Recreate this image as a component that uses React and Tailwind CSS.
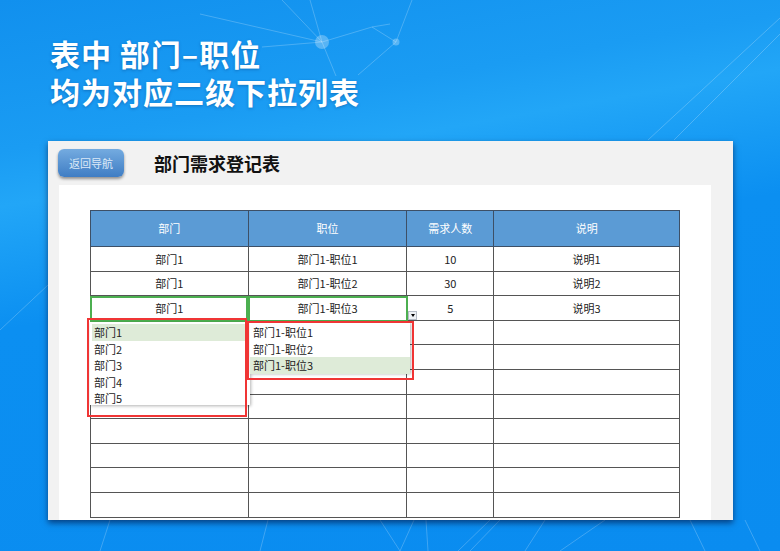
import React from 'react'

const cols = [158, 159, 87, 186]
const head = ['部门', '职位', '需求人数', '说明']
const rows = [
  ['部门1', '部门1-职位1', '10', '说明1'],
  ['部门1', '部门1-职位2', '30', '说明2'],
  ['部门1', '部门1-职位3', '5', '说明3'],
  ...Array.from({ length: 8 }, () => ['', '', '', '']),
]

function Network() {
  return (
    <svg className="absolute inset-0" width="780" height="551" viewBox="0 0 780 551">
      <g stroke="#ffffff" strokeOpacity="0.22" strokeWidth="1" fill="none">
        <line x1="322" y1="42" x2="282" y2="0" />
        <line x1="322" y1="42" x2="310" y2="0" />
        <line x1="322" y1="42" x2="200" y2="14" />
        <line x1="322" y1="42" x2="262" y2="47" />
        <line x1="322" y1="42" x2="336" y2="76" />
        <line x1="322" y1="42" x2="372" y2="27" />
        <line x1="372" y1="27" x2="390" y2="24" />
        <line x1="372" y1="27" x2="396" y2="42" />
        <line x1="396" y1="42" x2="412" y2="0" />
        <line x1="396" y1="42" x2="358" y2="75" />
        <line x1="780" y1="18" x2="648" y2="140" />
        <line x1="780" y1="34" x2="674" y2="140" />
        <line x1="0" y1="330" x2="48" y2="285" />
        <line x1="260" y1="551" x2="268" y2="520" />
        <line x1="400" y1="551" x2="380" y2="520" />
        <line x1="400" y1="551" x2="414" y2="520" />
        <line x1="428" y1="551" x2="426" y2="520" />
        <line x1="458" y1="551" x2="490" y2="520" />
        <line x1="470" y1="551" x2="500" y2="520" />
        <line x1="525" y1="551" x2="545" y2="520" />
        <line x1="560" y1="551" x2="605" y2="520" />
        <line x1="705" y1="551" x2="690" y2="520" />
        <line x1="760" y1="551" x2="745" y2="520" />
        <line x1="100" y1="551" x2="110" y2="520" />
      </g>
      <circle cx="322" cy="42" r="7" fill="#ffffff" fillOpacity="0.28" />
      <circle cx="396" cy="42" r="3.5" fill="#ffffff" fillOpacity="0.28" />
    </svg>
  )
}

export default function App() {
  return (
    <div className="relative w-[780px] h-[551px] overflow-hidden bg-[linear-gradient(170deg,#1190ee_0%,#1a9cf3_22%,#22a6f7_30%,#0b8ff1_48%,#0a8cf0_100%)]"
      style={{ fontFamily: '"Noto Sans CJK SC", "Noto Sans", sans-serif' }}>
      <Network />

      <div className="relative pl-[50px] pt-[34px] text-white font-bold text-[30px] leading-[38px] tracking-[1px] [text-shadow:0_1px_3px_rgba(0,40,100,0.35)]">
        <p>表中 部门–职位</p>
        <p>均为对应二级下拉列表</p>
      </div>

      {/* 面板 */}
      <div className="relative ml-[48px] mt-[31px] w-[685px] h-[379px] bg-[#f2f2f2] shadow-[0_3px_6px_rgba(0,0,40,0.55)] overflow-hidden">
        <div className="flex items-center h-[44px] pl-[10px]">
          <div className="w-[66px] h-[28px] rounded-md bg-[linear-gradient(180deg,#74abe0,#3f7dc4)] shadow-[0_2px_3px_rgba(0,0,0,0.4)] flex items-center justify-center text-[11px] text-[#dce9f7]">
            返回导航
          </div>
          <h1 className="ml-[30px] text-[18px] font-bold text-[#111]">部门需求登记表</h1>
        </div>

        <div className="ml-[11px] w-[652px] h-[400px] bg-white pt-[25px] pl-[31px]">
          <div className="relative w-[590px]">
            <table className="border-collapse text-[11px] text-[#222] table-fixed">
              <colgroup>
                {cols.map((w, i) => <col key={i} style={{ width: w }} />)}
              </colgroup>
              <thead>
                <tr className="h-[36px] bg-[#5b9bd5]">
                  {head.map(h => (
                    <th key={h} className="border border-[#3d4f66] font-normal text-white">{h}</th>
                  ))}
                </tr>
              </thead>
              <tbody>
                {rows.map((r, i) => (
                  <tr key={i} className="h-[24.6px]">
                    {r.map((c, j) => (
                      <td key={j} className="border border-[#555] text-center p-0">{c}</td>
                    ))}
                  </tr>
                ))}
              </tbody>
            </table>

            {/* 选中单元格 */}
            <div className="absolute left-0 top-[86px] w-[158px] h-[26px] border-2 border-[#4caf50]" />
            <div className="absolute left-[158px] top-[86px] w-[160px] h-[26px] border-2 border-[#4caf50]" />
            <div className="absolute left-[318px] top-[101px] w-[9px] h-[9px] bg-[#eef1f5] border border-[#b5bcc6] flex items-center justify-center">
              <div className="w-0 h-0 border-l-[2.5px] border-r-[2.5px] border-t-[3px] border-l-transparent border-r-transparent border-t-black" />
            </div>

            {/* 下拉列表 1 */}
            <div className="absolute left-0 top-[112px] w-[160px] h-[83px] bg-white shadow-[1px_1px_3px_rgba(0,0,0,0.3)] pt-[2px] pl-[2px] text-[11px] text-[#222]">
              {['部门1', '部门2', '部门3', '部门4', '部门5'].map((t, i) => (
                <div key={t} className={`h-[16.5px] leading-[16.5px] pl-[2px] w-[153px] ${i === 0 ? 'bg-[#deebd8]' : ''}`}>{t}</div>
              ))}
            </div>
            <div className="absolute left-[-3px] top-[108px] w-[160px] h-[99px] border-2 border-[#f03535]" />

            {/* 下拉列表 2 */}
            <div className="absolute left-[160px] top-[112px] w-[160px] h-[51px] bg-white shadow-[1px_1px_3px_rgba(0,0,0,0.3)] pt-[2px] text-[11px] text-[#222]">
              {['部门1-职位1', '部门1-职位2', '部门1-职位3'].map((t, i) => (
                <div key={t} className={`h-[16.5px] leading-[16.5px] pl-[3px] ${i === 2 ? 'bg-[#deebd8]' : ''}`}>{t}</div>
              ))}
            </div>
            <div className="absolute left-[157px] top-[111px] w-[167px] h-[59px] border-2 border-[#f03535]" />
          </div>
        </div>
      </div>
    </div>
  )
}
